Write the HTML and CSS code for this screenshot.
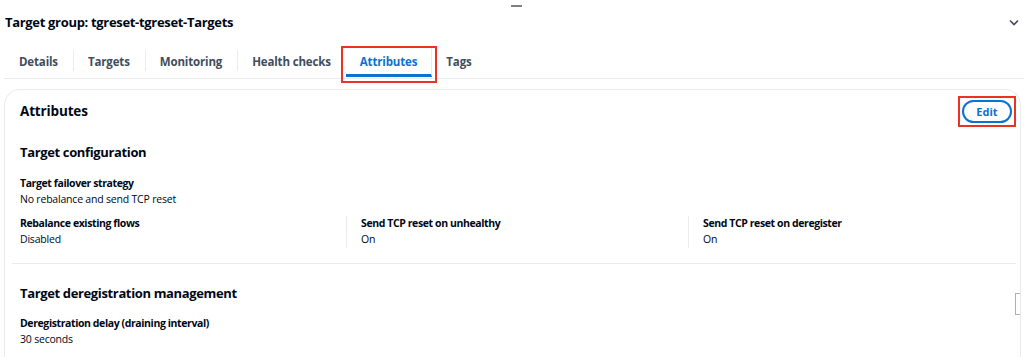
FILE: index.html
```html
<!DOCTYPE html>
<html>
<head>
<meta charset="utf-8">
<link rel="stylesheet" href="styles.css">
</head>
<body>
<div class="handle"></div>
<header class="top">
  <h1 class="title">Target group: tgreset-tgreset-Targets</h1>
  <svg class="chev" width="10" height="7" viewBox="0 0 10 7"><path d="M1 1.5 L5 5.5 L9 1.5" fill="none" stroke="#414d5c" stroke-width="1.6"/></svg>
</header>
<nav class="tabs">
  <div class="tab">Details</div>
  <div class="tab sep">Targets</div>
  <div class="tab sep">Monitoring</div>
  <div class="tab sep">Health checks</div>
  <div class="tab active"><span>Attributes</span></div>
  <div class="tab tags">Tags</div>
</nav>
<section class="card">
  <div class="card-head">
    <h2>Attributes</h2>
    <div class="edit-wrap"><button class="edit">Edit</button></div>
  </div>
  <h3>Target configuration</h3>
  <div class="kv">
    <div class="k">Target failover strategy</div>
    <div class="v">No rebalance and send TCP reset</div>
  </div>
  <div class="cols">
    <div class="col">
      <div class="k">Rebalance existing flows</div>
      <div class="v">Disabled</div>
    </div>
    <div class="col">
      <div class="k">Send TCP reset on unhealthy</div>
      <div class="v">On</div>
    </div>
    <div class="col">
      <div class="k">Send TCP reset on deregister</div>
      <div class="v">On</div>
    </div>
  </div>
  <hr class="divider">
  <div class="sec2">
    <h3>Target deregistration management</h3>
    <div class="bracket"></div>
  </div>
  <div class="kv kv2">
    <div class="k">Deregistration delay (draining interval)</div>
    <div class="v">30 seconds</div>
  </div>
</section>
</body>
</html>
```
FILE: styles.css
```css
* { box-sizing: border-box; }
html, body { margin: 0; padding: 0; background: #fff; }
body {
  font-family: "Open Sans", "Noto Sans", Arial, sans-serif;
  color: #000716;
  width: 1024px;
  height: 357px;
  overflow: hidden;
  position: relative;
}
.handle {
  position: absolute;
  left: 511px;
  top: 5px;
  width: 11px;
  height: 2px;
  background: #7d8189;
}
.top {
  display: flex;
  align-items: center;
  justify-content: space-between;
  height: 44px;
  padding: 0 5px 0 5px;
}
.title {
  margin: 0;
  font-size: 13px;
  font-weight: 700;
  letter-spacing: -0.32px;
}
.chev { margin-top: 1px; }
.tabs {
  display: flex;
  align-items: stretch;
  height: 35px;
  margin-left: 4px;
  border-bottom: 1px solid #e9ebed;
}
.tab {
  display: flex;
  align-items: center;
  padding: 0 15px;
  font-size: 11.5px;
  font-weight: 700;
  letter-spacing: -0.15px;
  color: #414d5c;
  position: relative;
}
.tab.sep::before {
  content: "";
  position: absolute;
  left: 0;
  top: 6px;
  bottom: 7px;
  border-left: 1px solid #e9ebed;
}
.tab.active {
  color: #0972d3;
  align-self: flex-start;
  padding: 0 3px;
  margin-left: -5px;
  margin-top: 2px;
  border: 2px solid #ea3323;
  height: 37px;
  align-items: flex-start;
}
.tab.active span {
  display: flex;
  align-items: center;
  height: 29px;
  padding: 0 14px;
  border-bottom: 3px solid #0972d3;
  border-right: 1px solid #e9ebed;
}
.tab.tags { margin-left: -6px; }
.card {
  margin: 10px 3px 0 4px;
  border: 1px solid #e9ebed;
  border-bottom: none;
  border-radius: 16px 16px 0 0;
  padding: 0 4px 0 15px;
  height: 268px;
}
.card-head {
  display: flex;
  align-items: center;
  justify-content: space-between;
  height: 42px;
  margin-top: 0;
}
h2 {
  margin: 0;
  font-size: 13.5px;
  font-weight: 700;
  letter-spacing: -0.15px;
}
.edit-wrap {
  border: 2px solid #ea3323;
  padding: 2px;
}
.edit {
  display: block;
  width: 50px;
  height: 23px;
  border: 2px solid #0972d3;
  border-radius: 12px;
  background: #fff;
  color: #0972d3;
  font-family: inherit;
  font-weight: 700;
  font-size: 11px;
  padding: 0;
}
h3 {
  margin: 0;
  font-size: 13px;
  font-weight: 700;
  letter-spacing: -0.36px;
}
.card > h3 { margin-top: 10px; height: 20px; display: flex; align-items: center; }
.kv { margin-top: 14px; }
.kv2 { margin-top: 13px; }
.k { font-size: 10.5px; font-weight: 700; line-height: 15px; letter-spacing: -0.4px; }
.v { font-size: 10.5px; line-height: 17px; letter-spacing: -0.2px; }
.cols {
  display: grid;
  grid-template-columns: 326px 342px 1fr;
  margin-top: 8px;
}
.col + .col {
  border-left: 1px solid #e9ebed;
  padding-left: 14px;
}
.divider {
  border: none;
  border-top: 1px solid #e9ebed;
  margin: 15px 0 0 -8px;
}
.sec2 {
  display: flex;
  align-items: center;
  justify-content: space-between;
  margin-top: 19px;
  height: 20px;
}
.bracket {
  width: 5px;
  height: 22px;
  border: 1px solid #aab0b8;
  border-right: none;
  margin-top: 22px;
  margin-right: -4px;
}
```
